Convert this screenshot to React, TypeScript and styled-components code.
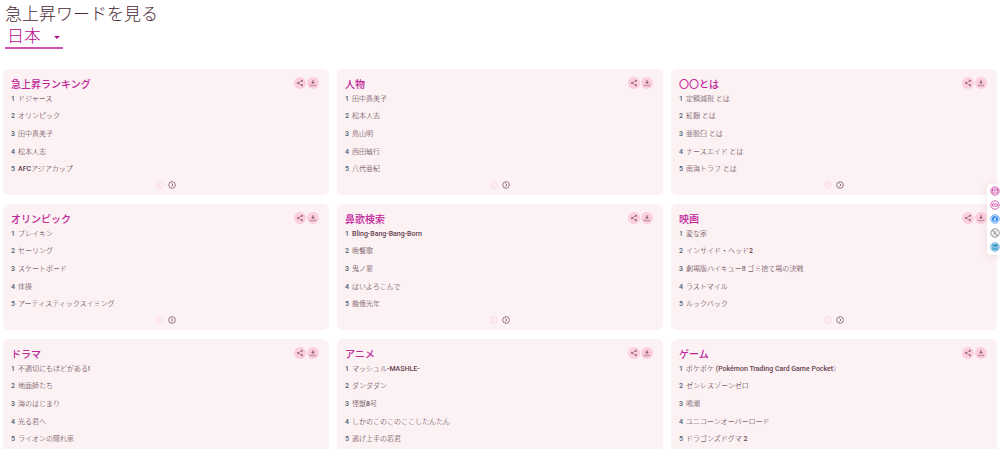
import React from "react";
import styled, { createGlobalStyle } from "styled-components";

const GlobalStyle = createGlobalStyle`
  *, *::before, *::after { box-sizing: border-box; }
  html { scrollbar-width: none; }
  body {
    margin: 0;
    background: #fff;
    color: #4a2735;
    font-family: Roboto, "Noto Sans CJK JP", sans-serif;
  }
`;

const Page = styled.main`
  padding: 4px 3px 9px;
`;

const Intro = styled.header`
  display: flex;
  flex-direction: column;
  align-items: flex-start;
  padding-left: 2px;
  margin-bottom: 20px;
`;

const Heading = styled.h1`
  margin: 0;
  font-size: 17px;
  line-height: 20px;
  font-weight: 300;
`;

const CountryField = styled.label`
  display: flex;
  align-items: flex-end;
  width: 58px;
  height: 25px;
  padding: 0 3px 0 2px;
  border-bottom: 2px solid #cf52ad;
  color: #b80c8c;
`;

const CountrySelect = styled.select`
  appearance: none;
  flex: 1;
  min-width: 0;
  padding: 0;
  border: 0;
  background: transparent;
  color: inherit;
  font: 300 17px/22px Roboto, "Noto Sans CJK JP", sans-serif;
`;

const Caret = styled.svg`
  width: 6px;
  height: 3px;
  margin-bottom: 8px;
  pointer-events: none;
`;

const Grid = styled.div`
  display: grid;
  grid-template-columns: repeat(3, minmax(0, 1fr));
  gap: 9px 8px;
`;

const Card = styled.section`
  display: flex;
  flex-direction: column;
  padding: 8px 10px 6px 8px;
  border-radius: 6px;
  background: #fcf1f3;
`;

const CardHeader = styled.div`
  display: flex;
  justify-content: space-between;
  align-items: flex-start;
  height: 13px;
`;

const CardTitle = styled.h2`
  margin: 0;
  color: #c0259a;
  font-size: 10px;
  line-height: 16px;
  font-weight: 500;
`;

const Actions = styled.div`
  display: flex;
  gap: 1px;
`;

const ActionButton = styled.button`
  display: grid;
  place-items: center;
  width: 12px;
  height: 12px;
  padding: 0;
  border: 0;
  border-radius: 50%;
  background: #fdcfde;
  color: #94667a;

  svg { width: 8px; height: 8px; }
`;

const TermList = styled.ol`
  display: grid;
  grid-template-rows: repeat(5, 1fr);
  align-items: center;
  height: 88px;
  margin: 0;
  padding: 0;
  list-style: none;
`;

const Term = styled.li`
  display: flex;
  font-size: 7px;
  line-height: 10px;
  font-weight: 300;
  white-space: nowrap;
`;

const Rank = styled.span`
  width: 7px;
  color: #4c6075;
  font-weight: 500;
`;

const Latin = styled.span`
  color: #65424f;
  font-weight: 500;
`;

const Pager = styled.div`
  display: flex;
  justify-content: center;
  gap: 4px;
  height: 8px;
  margin-top: 3px;
  padding-left: 2px;
`;

const PagerButton = styled.button`
  width: 8px;
  height: 8px;
  padding: 0;
  border: 0;
  background: transparent;
  color: #8b6473;

  &:disabled { color: #fdd3e0; }
  svg { display: block; width: 8px; height: 8px; }
`;

const ShareRail = styled.nav`
  position: fixed;
  top: 184px;
  right: 0;
  display: flex;
  flex-direction: column;
  align-items: center;
  gap: 4px;
  width: 13px;
  padding: 2px 0 3px 2px;
  border-radius: 4px 0 0 4px;
  background: #fff;
  box-shadow: 0 1px 8px rgba(120, 60, 90, 0.12);
`;

const RailLink = styled.a<{ $tone: string }>`
  display: block;
  width: 10px;
  height: 10px;
  color: ${(p) => p.$tone};

  svg { display: block; width: 10px; height: 10px; }
`;

const ShareIcon = () => (
  <svg viewBox="0 0 24 24" aria-hidden="true">
    <path d="M18 5 6 12l12 7" fill="none" stroke="currentColor" strokeWidth="2" />
    <circle cx="18" cy="5" r="3" fill="currentColor" />
    <circle cx="6" cy="12" r="3" fill="currentColor" />
    <circle cx="18" cy="19" r="3" fill="currentColor" />
  </svg>
);

const DownloadIcon = () => (
  <svg viewBox="0 0 24 24" aria-hidden="true">
    <path d="M10 4h4v6h4l-6 6-6-6h4z" fill="currentColor" />
    <path d="M4 16v4h16v-4" fill="none" stroke="currentColor" strokeWidth="2" />
  </svg>
);

const ArrowCircle = ({ back = false }: { back?: boolean }) => (
  <svg viewBox="0 0 24 24" aria-hidden="true">
    <circle cx="12" cy="12" r="10" fill="none" stroke="currentColor" strokeWidth="2.6" />
    <path
      d={back ? "M14 7l-5 5 5 5" : "M10 7l5 5-5 5"}
      fill="none"
      stroke="currentColor"
      strokeWidth="2.8"
    />
  </svg>
);

const Ring = ({ children }: { children: React.ReactNode }) => (
  <svg viewBox="0 0 30 30" aria-hidden="true">
    <circle cx="15" cy="15" r="12.5" fill="none" stroke="currentColor" strokeWidth="2.4" />
    {children}
  </svg>
);

const railItems = [
  {
    label: "メール",
    tone: "#c9379f",
    art: (
      <>
        <rect x="7" y="9" width="16" height="12" rx="1" fill="none" stroke="currentColor" strokeWidth="2.4" />
        <path d="M7 10l8 6 8-6" fill="none" stroke="currentColor" strokeWidth="2.4" />
      </>
    ),
  },
  {
    label: "リンク",
    tone: "#c9379f",
    art: (
      <path
        d="M14 11h-3a4 4 0 0 0 0 8h3M16 11h3a4 4 0 0 1 0 8h-3M11 15h8"
        fill="none"
        stroke="currentColor"
        strokeWidth="2.2"
      />
    ),
  },
  {
    label: "Facebook",
    tone: "#2d88f3",
    art: (
      <>
        <circle cx="15" cy="15" r="9" fill="currentColor" />
        <path d="M19 10h-2q-2 0-2 3v11M11 16h7" fill="none" stroke="#fff" strokeWidth="2.6" />
      </>
    ),
  },
  {
    label: "X",
    tone: "#6d6d6d",
    art: (
      <path
        d="M8 8h3l11 14h-3zM21 8l-5 6M14 16l-6 6"
        fill="none"
        stroke="currentColor"
        strokeWidth="2"
      />
    ),
  },
  {
    label: "LinkedIn",
    tone: "#1c8cc4",
    art: (
      <>
        <rect x="7" y="7" width="16" height="16" rx="2" fill="currentColor" />
        <path d="M11 13v7M11 9v2M15 20v-7M15 16q4-5 5 0v4" fill="none" stroke="#fff" strokeWidth="1.8" />
      </>
    ),
  },
];

const cards = [
  { title: "急上昇ランキング", terms: ["ドジャース", "オリンピック", "田中真美子", "松本人志", "AFCアジアカップ"] },
  { title: "人物", terms: ["田中真美子", "松本人志", "鳥山明", "西田敏行", "八代亜紀"] },
  { title: "〇〇とは", terms: ["定額減税 とは", "紅麹 とは", "亜脱臼 とは", "ナースエイド とは", "南海トラフ とは"] },
  { title: "オリンピック", terms: ["ブレイキン", "セーリング", "スケートボード", "体操", "アーティスティックスイミング"] },
  { title: "鼻歌検索", terms: ["Bling-Bang-Bang-Born", "晩餐歌", "鬼ノ宴", "はいよろこんで", "幾億光年"] },
  { title: "映画", terms: ["変な家", "インサイド・ヘッド2", "劇場版ハイキュー!! ゴミ捨て場の決戦", "ラストマイル", "ルックバック"] },
  { title: "ドラマ", terms: ["不適切にもほどがある!", "地面師たち", "海のはじまり", "光る君へ", "ライオンの隠れ家"] },
  { title: "アニメ", terms: ["マッシュル-MASHLE-", "ダンダダン", "怪獣8号", "しかのこのこのここしたんたん", "逃げ上手の若君"] },
  { title: "ゲーム", terms: ["ポケポケ (Pokémon Trading Card Game Pocket）", "ゼンレスゾーンゼロ", "鳴潮", "ユニコーンオーバーロード", "ドラゴンズドグマ 2"] },
];

// Latin runs are set heavier than the Japanese around them.
const TermText = ({ text }: { text: string }) => (
  <span>
    {text.split(/([!-~é]+(?: +[!-~é]+)*)/).map((part, i) => (i % 2 ? <Latin key={i}>{part}</Latin> : part))}
  </span>
);

const TrendCard = ({ title, terms }: { title: string; terms: string[] }) => (
  <Card>
    <CardHeader>
      <CardTitle>{title}</CardTitle>
      <Actions>
        <ActionButton type="button" aria-label="共有"><ShareIcon /></ActionButton>
        <ActionButton type="button" aria-label="ダウンロード"><DownloadIcon /></ActionButton>
      </Actions>
    </CardHeader>
    <TermList>
      {terms.map((term, i) => (
        <Term key={term}>
          <Rank>{i + 1}</Rank>
          <TermText text={term} />
        </Term>
      ))}
    </TermList>
    <Pager>
      <PagerButton type="button" aria-label="前へ" disabled><ArrowCircle back /></PagerButton>
      <PagerButton type="button" aria-label="次へ"><ArrowCircle /></PagerButton>
    </Pager>
  </Card>
);

export default function App() {
  return (
    <>
      <GlobalStyle />
      <Page lang="ja">
        <Intro>
          <Heading>急上昇ワードを見る</Heading>
          <CountryField>
            <CountrySelect aria-label="国" defaultValue="jp">
              <option value="jp">日本</option>
            </CountrySelect>
            <Caret viewBox="0 0 6 3" aria-hidden="true">
              <path d="M0 0h6L3 3z" fill="currentColor" />
            </Caret>
          </CountryField>
        </Intro>
        <Grid>
          {cards.map((card) => (
            <TrendCard key={card.title} {...card} />
          ))}
        </Grid>
      </Page>
      <ShareRail aria-label="共有">
        {railItems.map((item) => (
          <RailLink key={item.label} href="#" aria-label={item.label} $tone={item.tone}>
            <Ring>{item.art}</Ring>
          </RailLink>
        ))}
      </ShareRail>
    </>
  );
}
